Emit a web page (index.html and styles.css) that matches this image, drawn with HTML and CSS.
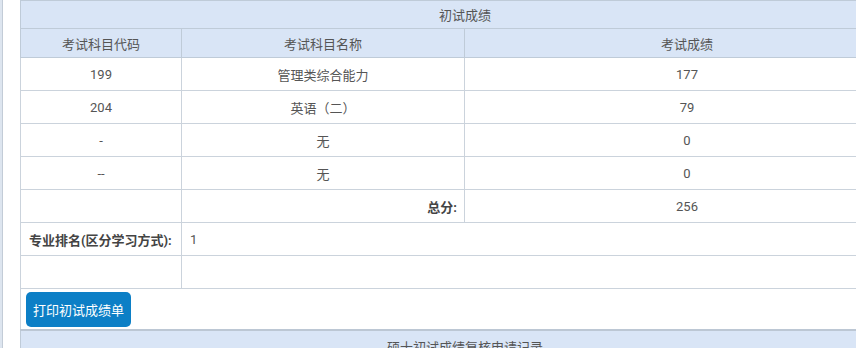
FILE: index.html
```html
<!DOCTYPE html>
<html lang="zh-CN">
<head>
    <meta charset="UTF-8">
    <meta name="viewport" content="width=device-width, initial-scale=1.0">
    <title>初试成绩</title>
    <link rel="stylesheet" href="styles.css">
</head>
<body>
    <div class="page">
        <div class="side"></div>

        <div class="main">
            <table class="score-table">
                <colgroup>
                    <col class="c1">
                    <col class="c2">
                    <col class="c3">
                </colgroup>
                <tr class="title-row">
                    <td colspan="3">初试成绩</td>
                </tr>
                <tr class="head-row">
                    <td>考试科目代码</td>
                    <td>考试科目名称</td>
                    <td>考试成绩</td>
                </tr>
                <tr>
                    <td>199</td>
                    <td>管理类综合能力</td>
                    <td>177</td>
                </tr>
                <tr>
                    <td>204</td>
                    <td>英语（二）</td>
                    <td>79</td>
                </tr>
                <tr>
                    <td>-</td>
                    <td>无</td>
                    <td>0</td>
                </tr>
                <tr>
                    <td>--</td>
                    <td>无</td>
                    <td>0</td>
                </tr>
                <tr>
                    <td></td>
                    <td class="label right">总分:</td>
                    <td>256</td>
                </tr>
                <tr>
                    <td class="label left">专业排名(区分学习方式):</td>
                    <td class="left" colspan="2">1</td>
                </tr>
                <tr>
                    <td></td>
                    <td colspan="2"></td>
                </tr>
                <tr class="btn-row">
                    <td colspan="3"><button class="btn">打印初试成绩单</button></td>
                </tr>
            </table>

            <table class="score-table next">
                <tr class="title-row">
                    <td>硕士初试成绩复核申请记录</td>
                </tr>
            </table>
        </div>
    </div>
</body>
</html>
```

FILE: styles.css
```css
* {
    margin: 0;
    padding: 0;
    box-sizing: border-box;
}

body {
    font-family: Roboto, "Noto Sans CJK SC", sans-serif;
    font-size: 13px;
    color: #555;
    background: #fff;
    overflow: hidden;
}

.page {
    display: flex;
    width: 920px;
}

/* 左侧菜单边缘 */
.side {
    width: 3px;
    background: #dde5ef;
    border-right: 1px solid #c3ccd7;
}

.main {
    padding-left: 17px;
}

.score-table {
    width: 890px;
    border-collapse: collapse;
    border-left: 1px solid #c6d0db;
}

.score-table td {
    border: 1px solid #cbd3dc;
    text-align: center;
    height: 33px;
    padding: 0 8px;
}

.c1 { width: 161px; }
.c2 { width: 283px; }

.title-row td,
.head-row td {
    background: #d9e5f6;
    height: 29px;
    border-color: #bfcbd8;
}

.title-row td {
    height: 28px;
}

.label {
    font-weight: bold;
    color: #444;
}

.left {
    text-align: left !important;
}

.right {
    text-align: right !important;
    padding-right: 7px !important;
}

.btn-row td {
    height: 41px;
    text-align: left;
    padding: 2px 5px 0;
    border-bottom: 2px solid #bcc7d4;
}

.btn {
    font-family: "Noto Sans CJK SC", sans-serif;
    font-size: 13px;
    color: #fff;
    background: #0c7fc6;
    border: none;
    border-radius: 5px;
    height: 35px;
    padding: 0 7px;
    cursor: pointer;
}

.next {
    border-top: none;
}

.next td {
    border-top: none;
    padding-top: 4px;
}
```
